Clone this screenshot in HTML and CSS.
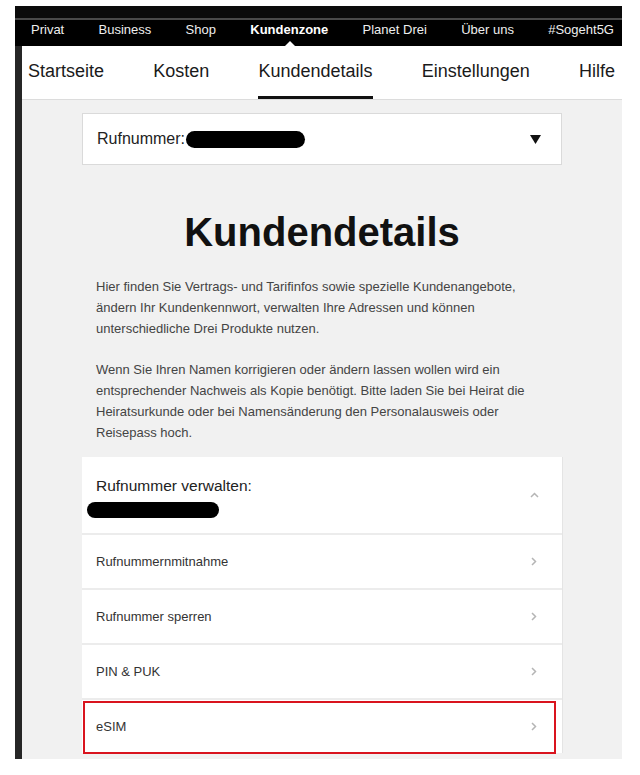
FILE: index.html
```html
<!DOCTYPE html>
<html lang="de">
<head>
  <meta charset="UTF-8">
  <title>Kundendetails</title>
  <meta name="viewport" content="width=device-width, initial-scale=1.0">
  <link rel="stylesheet" href="styles.css">
</head>
<body>
  <div class="frame">
    <!-- Main navigation -->
    <nav class="topnav">
      <a href="#">Privat</a>
      <a href="#">Business</a>
      <a href="#">Shop</a>
      <a href="#" class="current">Kundenzone</a>
      <a href="#">Planet Drei</a>
      <a href="#">Über uns</a>
      <a href="#">#Sogeht5G</a>
    </nav>

    <!-- Kundenzone navigation -->
    <nav class="subnav">
      <a href="#">Startseite</a>
      <a href="#">Kosten</a>
      <a href="#" class="active">Kundendetails</a>
      <a href="#">Einstellungen</a>
      <a href="#">Hilfe</a>
    </nav>

    <main class="content">
      <div class="column">
        <!-- Number selector -->
        <div class="number-select">
          <span class="select-label">Rufnummer:</span>
          <span class="redact redact-select"></span>
          <svg class="caret" width="11" height="9" viewBox="0 0 11 9"><polygon points="0,0 11,0 5.5,9" fill="#111"/></svg>
        </div>

        <h1>Kundendetails</h1>

        <p>Hier finden Sie Vertrags- und Tarifinfos sowie spezielle Kundenangebote, ändern Ihr Kundenkennwort, verwalten Ihre Adressen und können unterschiedliche Drei Produkte nutzen.</p>
        <p>Wenn Sie Ihren Namen korrigieren oder ändern lassen wollen wird ein entsprechender Nachweis als Kopie benötigt. Bitte laden Sie bei Heirat die Heiratsurkunde oder bei Namensänderung den Personalausweis oder Reisepass hoch.</p>

        <!-- Manage number -->
        <section class="manage">
          <div class="manage-head">
            <div>
              <div class="manage-title">Rufnummer verwalten:</div>
              <span class="redact redact-head"></span>
            </div>
            <svg class="chevron" width="9" height="6" viewBox="0 0 9 6"><polyline points="1,5 4.5,1.5 8,5" fill="none" stroke="#b5b5b5" stroke-width="1.5"/></svg>
          </div>
          <a href="#" class="row">Rufnummernmitnahme
            <svg class="chevron" width="6" height="9" viewBox="0 0 6 9"><polyline points="1,1 4.5,4.5 1,8" fill="none" stroke="#b5b5b5" stroke-width="1.5"/></svg>
          </a>
          <a href="#" class="row">Rufnummer sperren
            <svg class="chevron" width="6" height="9" viewBox="0 0 6 9"><polyline points="1,1 4.5,4.5 1,8" fill="none" stroke="#b5b5b5" stroke-width="1.5"/></svg>
          </a>
          <a href="#" class="row">PIN &amp; PUK
            <svg class="chevron" width="6" height="9" viewBox="0 0 6 9"><polyline points="1,1 4.5,4.5 1,8" fill="none" stroke="#b5b5b5" stroke-width="1.5"/></svg>
          </a>
          <a href="#" class="row row-marked">eSIM
            <svg class="chevron" width="6" height="9" viewBox="0 0 6 9"><polyline points="1,1 4.5,4.5 1,8" fill="none" stroke="#b5b5b5" stroke-width="1.5"/></svg>
          </a>
        </section>
      </div>
    </main>
  </div>
</body>
</html>
```

FILE: styles.css
```css
/* Basic styling */
body {
  margin: 0;
  background-color: #fff;
  font-family: "Liberation Sans", Arial, sans-serif;
  color: #222;
}
a {
  color: inherit;
  text-decoration: none;
}

.frame {
  width: 600px;
  margin: 6px 0 0 15px;
  border-left: 7px solid #262626;
}

/* Top navigation */
.topnav {
  display: flex;
  justify-content: space-between;
  align-items: center;
  height: 33px;
  margin-left: -7px;
  padding: 0 8px 0 16px;
  border-top: 7px solid #0b0b0b;
  box-shadow: inset 0 5px 0 #0b0b0b, inset 0 7px 0 #4a4a4a;
  background-color: #000;
  color: #eee;
  font-size: 13px;
}
.topnav .current {
  position: relative;
  align-self: stretch;
  display: flex;
  align-items: center;
  font-weight: bold;
  color: #fff;
}
.topnav .current::after {
  content: "";
  position: absolute;
  left: 50%;
  bottom: 0;
  margin-left: -4px;
  border: 5px solid transparent;
  border-bottom-color: #fff;
  border-top-width: 0;
}

/* Sub navigation */
.subnav {
  display: flex;
  justify-content: space-between;
  height: 53px;
  padding: 0 7px 0 6px;
  border-bottom: 1px solid #dcdcdc;
  background-color: #fff;
  font-size: 18px;
  color: #1a1a1a;
}
.subnav a {
  display: flex;
  align-items: center;
  border-bottom: 3px solid transparent;
}
.subnav .active {
  border-bottom-color: #111;
}

/* Content */
.content {
  padding: 13px 0 6px;
  background-color: #f1f1f1;
}
.column {
  width: 480px;
  margin: 0 auto;
}

.number-select {
  display: flex;
  align-items: center;
  height: 50px;
  padding: 0 20px 0 14px;
  border: 1px solid #dadada;
  background-color: #fff;
  font-size: 16px;
}
.redact {
  display: inline-block;
  background-color: #000;
  border-radius: 9px;
}
.redact-select {
  width: 119px;
  height: 17px;
  margin-left: 1px;
}
.caret {
  margin-left: auto;
}

h1 {
  margin: 43px 0 0;
  font-size: 40px;
  line-height: 48px;
  text-align: center;
  color: #111;
}

p {
  margin: 20px 0 0;
  padding: 0 14px;
  font-size: 13px;
  line-height: 21px;
  color: #444;
}

/* Manage card */
.manage {
  margin-top: 14px;
  background-color: #fff;
  box-shadow: 1px 0 0 #e4e4e4;
}
.manage-head {
  display: flex;
  justify-content: space-between;
  align-items: center;
  height: 76px;
  padding: 0 23px 0 14px;
  box-sizing: border-box;
}
.manage-title {
  font-size: 15.5px;
  line-height: 19px;
  margin-top: 8px;
  color: #222;
}
.redact-head {
  width: 132px;
  height: 16px;
  margin: 7px 0 0 -9px;
}
.row {
  position: relative;
  display: flex;
  justify-content: space-between;
  align-items: center;
  height: 53px;
  padding: 0 25px 0 14px;
  border-top: 2px solid #ececec;
  font-size: 13px;
  color: #333;
}
.row-marked::after {
  content: "";
  position: absolute;
  top: 1px;
  bottom: -1px;
  left: 1px;
  right: 6px;
  border: 2px solid #d9141e;
}
```
